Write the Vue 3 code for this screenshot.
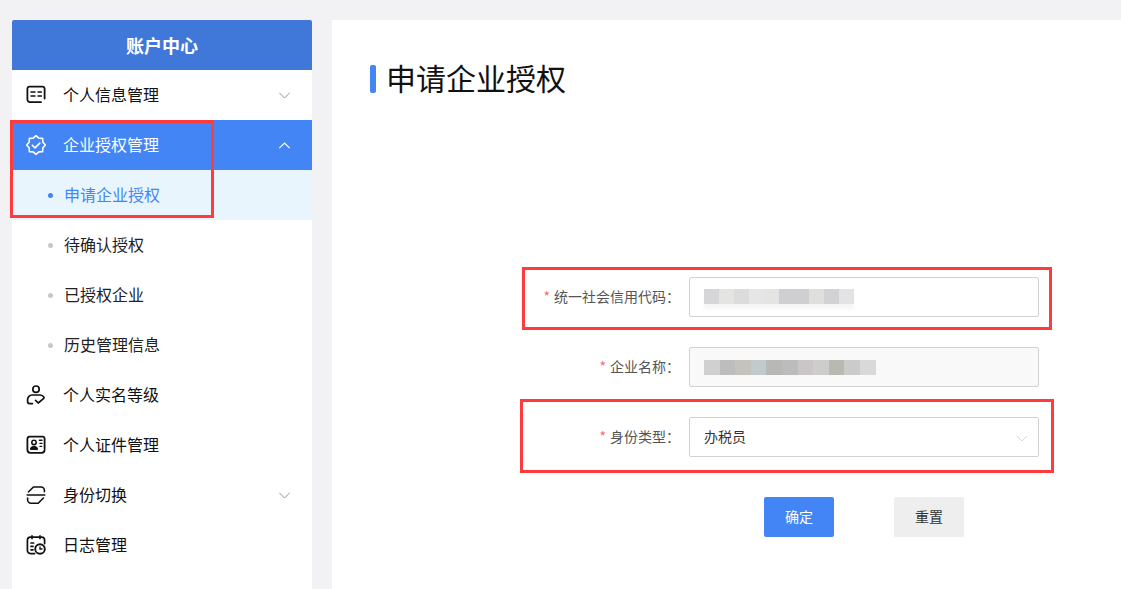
<script setup>
const code = ['#d6d6d8','#e4e4e2','#dcdcdd','#e6e6e6','#e4e4e2','#cfcfd1','#cfcfd1','#e0dfdd','#d2d2d6','#e3e3e5']
const name = ['#d0d0d0','#bdbdbd','#c4c3bd','#c2cacd','#b8b8b5','#bcbcbc','#c9c5c8','#cdcecc','#b9b9b2','#cbcbcb','#d9d9d9']
const subs = [
  { t: '申请企业授权', active: true },
  { t: '待确认授权' },
  { t: '已授权企业' },
  { t: '历史管理信息' }
]
</script>

<template>
  <div class="page">
    <aside class="side">
      <div class="side-head">账户中心</div>

      <div class="item">
        <svg class="ico" viewBox="0 0 20 20" fill="none" stroke="currentColor" stroke-width="1.8" stroke-linecap="round">
          <path d="M18.6 13.6V3.6a2 2 0 0 0-2-2H3.4a2 2 0 0 0-2 2v11a2.6 2.6 0 0 0 2.6 2.6h11"/>
          <path d="M5 7h4M5 11h4M12 7h3.4M12 11h3.4" stroke-width="1.5"/>
        </svg>
        <span class="txt">个人信息管理</span>
        <svg class="chev" viewBox="0 0 12 7" fill="none" stroke="currentColor" stroke-width="1"><path d="M.8.8 6 6l5.2-5.2"/></svg>
      </div>

      <div class="item open">
        <svg class="ico" viewBox="0 0 20 20" fill="none" stroke="currentColor" stroke-width="1.6" stroke-linejoin="round" stroke-linecap="round">
          <path d="M10 .6 12.83 3.16 16.65 3.35 16.84 7.17 19.4 10 16.84 12.83 16.65 16.65 12.83 16.84 10 19.4 7.17 16.84 3.35 16.65 3.16 12.83 .6 10 3.16 7.17 3.35 3.35 7.17 3.16Z"/>
          <path d="M6.3 10.2l2.7 2.7 4.8-4.8"/>
        </svg>
        <span class="txt">企业授权管理</span>
        <svg class="chev" viewBox="0 0 12 7" fill="none" stroke="currentColor" stroke-width="1.2"><path d="M.8 6.2 6 1l5.2 5.2"/></svg>
      </div>

      <div v-for="s in subs" :key="s.t" class="sub" :class="{ on: s.active }">
        <i class="dot"></i><span class="txt">{{ s.t }}</span>
      </div>

      <div class="item">
        <svg class="ico" viewBox="0 0 20 20" fill="none" stroke="currentColor" stroke-width="1.7" stroke-linecap="round" stroke-linejoin="round">
          <circle cx="10" cy="4.2" r="3.2"/>
          <path d="M6.5 18.6H3.6a2 2 0 0 1-2-2v-2.2A4.4 4.4 0 0 1 6 10h8a4.4 4.4 0 0 1 4 2.4"/>
          <path d="M9.6 15.4l2.6 2.6 5.6-4.6"/>
        </svg>
        <span class="txt">个人实名等级</span>
      </div>

      <div class="item">
        <svg class="ico" viewBox="0 0 20 20" fill="none" stroke="currentColor" stroke-width="1.8" stroke-linecap="round">
          <path d="M18.6 13.6V3.6a2 2 0 0 0-2-2H3.6a2.2 2.2 0 0 0-2.2 2.2v11a3 3 0 0 0 3 3h11.2a3 3 0 0 0 3-3"/>
          <circle cx="8" cy="7.4" r="2.2" stroke-width="1.5"/>
          <path d="M4.4 14.2c0-2 1.6-3 3.6-3s3.6 1 3.6 3z" fill="currentColor" stroke-width="1"/>
          <path d="M13.4 5.2h2.6M14 8.4h2M14 11.4h1.6" stroke-width="1.4"/>
        </svg>
        <span class="txt">个人证件管理</span>
      </div>

      <div class="item">
        <svg class="ico" viewBox="0 0 20 20" fill="none" stroke="currentColor" stroke-width="1.6" stroke-linecap="round" stroke-linejoin="round">
          <path d="M2.4 7 7.4 2H15a3.4 3.4 0 0 1 3.4 3.4V6.8"/>
          <path d="M1.2 10h17.6"/>
          <path d="M1.6 13v1.8a3.4 3.4 0 0 0 3.4 3.4h7.2l5.2-5.2"/>
        </svg>
        <span class="txt">身份切换</span>
        <svg class="chev" viewBox="0 0 12 7" fill="none" stroke="currentColor" stroke-width="1"><path d="M.8.8 6 6l5.2-5.2"/></svg>
      </div>

      <div class="item">
        <svg class="ico" viewBox="0 0 20 20" fill="none" stroke="currentColor" stroke-width="1.7" stroke-linecap="round">
          <path d="M8.6 18.6H4.4a3 3 0 0 1-3-3V5.2a3 3 0 0 1 3-3h11.2a3 3 0 0 1 3 3v3.4"/>
          <path d="M6 .9v2.6M14 .9v2.6M5 8h2.6M5 11.4h2M5 14.8h2"/>
          <circle cx="14" cy="14" r="4.8" stroke-width="1.9"/>
          <path d="M14 11.8V14h2" stroke-width="1.3"/>
        </svg>
        <span class="txt">日志管理</span>
      </div>
    </aside>

    <main class="main">
      <h1 class="title">申请企业授权</h1>

      <form class="form" @submit.prevent>
        <div class="row">
          <label class="lab"><em>*</em>统一社会信用代码：</label>
          <div class="field">
            <span class="blur light"><b v-for="(c, i) in code" :key="i" :style="{ background: c }"></b></span>
          </div>
        </div>
        <div class="row">
          <label class="lab"><em>*</em>企业名称：</label>
          <div class="field off">
            <span class="blur dark"><b v-for="(c, i) in name" :key="i" :style="{ background: c }"></b></span>
          </div>
        </div>
        <div class="row">
          <label class="lab"><em>*</em>身份类型：</label>
          <div class="field">
            <span class="val">办税员</span>
            <svg class="sel" viewBox="0 0 12 7" fill="none" stroke="currentColor" stroke-width="1"><path d="M.8.8 6 6l5.2-5.2"/></svg>
          </div>
        </div>
        <div class="btns">
          <button class="btn pri" type="button"><span class="val">确定</span></button>
          <button class="btn" type="button"><span class="val">重置</span></button>
        </div>
      </form>
    </main>

    <div class="mark m1"></div>
    <div class="mark m2"></div>
    <div class="mark m3"></div>
  </div>
</template>

<style>
html, body { margin: 0; background: #f2f2f4; }
</style>

<style scoped>
.page {
  position: relative;
  display: flex;
  gap: 20px;
  box-sizing: border-box;
  width: 1121px;
  height: 589px;
  padding: 20px 0 0 12px;
  overflow: hidden;
  background: #f2f2f4;
  color: #111;
  font-family: "Noto Sans CJK SC", "Liberation Sans", sans-serif;
  font-size: 16px;
}
.side {
  flex: 0 0 300px;
  background: #fff;
  border-radius: 2px 2px 0 0;
}
.side-head {
  height: 50px;
  line-height: 50px;
  text-align: center;
  color: #fff;
  font-size: 18px;
  font-weight: 700;
  background: #3f78d9;
  border-radius: 2px 2px 0 0;
}
.item {
  display: flex;
  align-items: center;
  height: 50px;
  padding: 0 21px 0 14px;
  color: #111;
}
.txt {
  margin-bottom: 2px;
}
.item.open {
  color: #fff;
  background: #4385f5;
}
.ico {
  flex: none;
  width: 20px;
  height: 20px;
  margin-right: 17px;
}
.chev {
  flex: none;
  width: 13px;
  height: 7px;
  margin-left: auto;
  color: #8d95a1;
}
.open .chev { color: #fff; }
.sub {
  display: flex;
  align-items: center;
  height: 50px;
  padding-left: 36px;
  color: #222;
}
.sub.on {
  color: #4385f5;
  background: #e9f5fd;
}
.dot {
  flex: none;
  width: 5px;
  height: 5px;
  margin-right: 11px;
  border-radius: 50%;
  background: #c8c8c8;
}
.on .dot { background: #4385f5; }

.main {
  flex: 1;
  background: #fff;
  padding: 41px 0 0 38px;
}
.title {
  margin: 0;
  padding-left: 16px;
  height: 36px;
  line-height: 32px;
  font-size: 30px;
  font-weight: 400;
  color: #111;
  position: relative;
}
.title::before {
  content: "";
  position: absolute;
  left: 0;
  top: 4px;
  width: 6px;
  height: 28px;
  border-radius: 2px;
  background: #4385f5;
}
.form {
  display: flex;
  flex-direction: column;
  gap: 30px;
  margin-top: 180px;
}
.row {
  display: flex;
  align-items: center;
  height: 40px;
}
.lab {
  flex: 0 0 310px;
  margin-right: 9px;
  margin-bottom: 2px;
  text-align: right;
  font-size: 14px;
  color: #555;
  white-space: nowrap;
}
.lab em {
  font-style: normal;
  color: #f56c6c;
  margin-right: 4px;
}
.field {
  flex: 0 0 350px;
  position: relative;
  box-sizing: border-box;
  height: 40px;
  display: flex;
  align-items: center;
  padding-left: 14px;
  border: 1px solid #d2d2d2;
  border-radius: 2px;
  font-size: 14px;
  color: #333;
  background: #fff;
}
.field.off { background: #f9f9f9; }
.val {
  display: block;
  margin-bottom: 2px;
}
.blur {
  display: flex;
  height: 15px;
  filter: blur(.6px);
}
.blur.light {
  box-shadow: 0 5px 3px #f6f6f6;
  margin-top: -1px;
}
.blur.dark {
  margin-top: 1px;
}
.blur b {
  display: block;
  width: 15px;
  height: 15px;
}
.blur.dark b { width: 15.6px; }
.sel {
  position: absolute;
  right: 10px;
  top: 17px;
  width: 12px;
  height: 7px;
  color: #d3d6e4;
}
.btns {
  display: flex;
  gap: 60px;
  margin-top: 10px;
  padding-left: 394px;
}
.btn {
  width: 70px;
  height: 40px;
  border: 0;
  border-radius: 2px;
  background: #eee;
  color: #333;
  font: inherit;
  font-size: 14px;
  padding: 0;
}
.btn.pri {
  background: #4385f5;
  color: #fff;
}
.mark {
  position: absolute;
  box-sizing: border-box;
  border: 3px solid #ff3b3d;
  pointer-events: none;
}
.m1 { left: 10px; top: 120px; width: 204px; height: 98px; }
.m2 { left: 522px; top: 267px; width: 530px; height: 63px; }
.m3 { left: 520px; top: 399px; width: 534px; height: 74px; }
</style>
